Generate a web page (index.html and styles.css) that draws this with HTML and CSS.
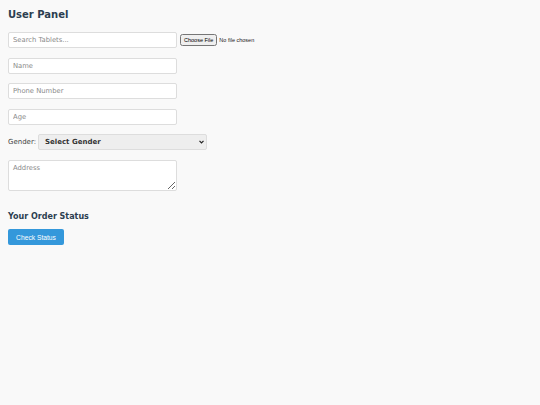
FILE: index.html
```html
<!DOCTYPE html>
<html>
<head>
<meta charset="utf-8">
<link rel="stylesheet" href="styles.css">
</head>
<body>
<div class="panel">
  <h2 class="title">User Panel</h2>
  <div class="row">
    <input class="field" type="text" placeholder="Search Tablets...">
    <input class="file" type="file">
  </div>
  <div class="row"><input class="field" type="text" placeholder="Name"></div>
  <div class="row"><input class="field" type="text" placeholder="Phone Number"></div>
  <div class="row"><input class="field" type="text" placeholder="Age"></div>
  <div class="row gender">
    <label class="label">Gender:</label>
    <div class="select-wrap">
      <select class="select"><option>Select Gender</option></select>
      <svg class="chev" width="5" height="4" viewBox="0 0 5 4"><path d="M0.5 0.8 L2.5 2.8 L4.5 0.8" fill="none" stroke="#222" stroke-width="1.2"/></svg>
    </div>
  </div>
  <div class="row"><textarea class="area" placeholder="Address"></textarea></div>
  <h3 class="subtitle">Your Order Status</h3>
  <button class="btn">Check Status</button>
</div>
</body>
</html>
```
FILE: styles.css
```css
html, body { margin: 0; padding: 0; background: #f9f9f9; }
body { font-family: "DejaVu Sans", Verdana, sans-serif; color: #333; font-size: 7px; }
.panel { padding: 8px; }
.title { margin: 0 0 11px 0; padding-top: 1px; font-size: 10px; font-weight: bold; color: #2c3e50; line-height: 12px; }
.row { display: flex; align-items: center; margin-bottom: 9.5px; }
.field { box-sizing: border-box; width: 169px; height: 16px; padding: 0 4px; border: 1px solid #ddd; border-radius: 2px; background: #fff; font-family: "DejaVu Sans", sans-serif; font-size: 6.8px; color: #333; outline: none; }
.field::placeholder, .area::placeholder { color: #8a8a8a; }
.file { margin-left: 3px; font-family: "Liberation Sans", Arial, sans-serif; font-size: 5.5px; width: 80px; color: #222; }
.file::file-selector-button { font-size: 5.5px; padding: 1px 2px; margin-right: 2px; }
.gender { margin-bottom: 10px; }
.label { font-size: 7px; color: #444; margin-right: 2px; }
.select-wrap { position: relative; display: flex; }
.select { box-sizing: border-box; width: 169px; height: 16px; border: 1px solid #ddd; border-radius: 2px; background: #eee; font-family: "DejaVu Sans", sans-serif; font-size: 7px; font-weight: bold; color: #333; padding: 0 6px; -webkit-appearance: none; appearance: none; outline: none; }
.chev { position: absolute; right: 3px; top: 6px; }
.area { box-sizing: border-box; width: 169px; height: 31px; padding: 3px 4px; border: 1px solid #ddd; border-radius: 2px; background: #fff; font-family: "DejaVu Sans", sans-serif; font-size: 6.8px; resize: vertical; display: block; }
.subtitle { margin: 21px 0 7px 0; font-size: 8px; font-weight: bold; color: #2c3e50; line-height: 10px; }
.btn { display: block; box-sizing: border-box; width: 56px; height: 16px; padding: 0; border: none; border-radius: 2px; background: #3498db; color: #fff; font-family: "Liberation Sans", Arial, sans-serif; font-size: 6.7px; }
```
